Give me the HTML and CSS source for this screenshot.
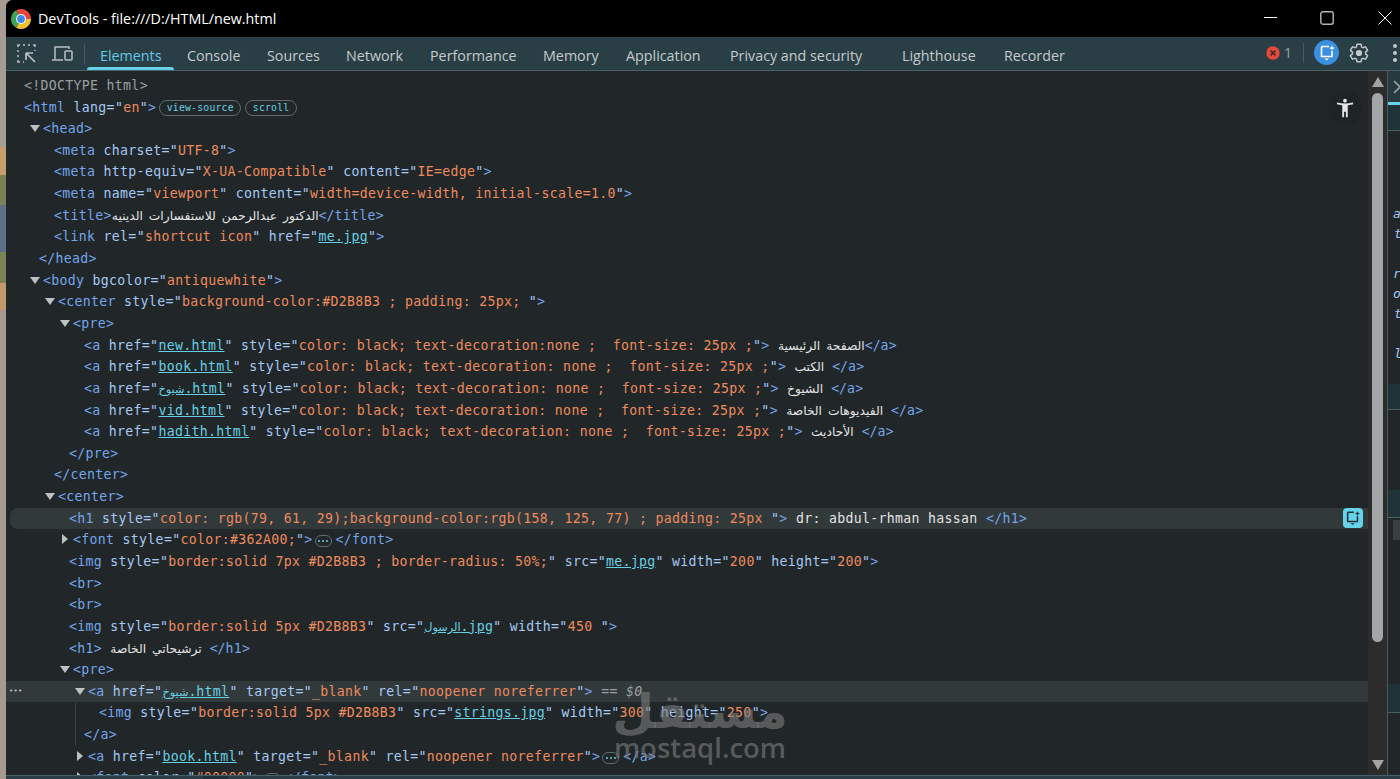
FILE: index.html
```html
<!DOCTYPE html>
<html lang="en">
<head>
    <meta charset="UTF-8">
    <title>DevTools - file:///D:/HTML/new.html</title>
    <link rel="stylesheet" href="styles.css">
</head>
<body>
<div class="screen">
    <div class="wall">
        <div class="w1"></div>
        <div class="w2"></div>
        <div class="w3"></div>
        <div class="w4"></div>
        <div class="w3b"></div>
        <div class="w2b"></div>
        <div class="w5"></div>
    </div>
    <div class="window">
        <div class="titlebar">
            <svg class="chrome" width="20" height="20" viewBox="0 0 20 20">
                <path d="M10 10L5 1.34A10 10 0 0 1 20 10Z" fill="#e5453a"/>
                <path d="M10 10L20 10A10 10 0 0 1 5 18.66Z" fill="#f5c02e"/>
                <path d="M10 10L5 18.66A10 10 0 0 1 5 1.34Z" fill="#3aa757"/>
                <circle cx="10" cy="10" r="5" fill="#fff"/>
                <circle cx="10" cy="10" r="3.9" fill="#3f86ee"/>
            </svg>
            <span class="wintitle">DevTools - file:///D:/HTML/new.html</span>
            <div class="winbtns">
                <svg class="winbtn" width="56" height="14" viewBox="0 0 56 14"><path d="M0 6.5H13" stroke="#fff" stroke-width="1"/></svg>
                <svg class="winbtn" width="58" height="14" viewBox="0 0 58 14"><rect x="0.8" y="0.8" width="12.4" height="12.4" rx="2" fill="none" stroke="#b5b5b5" stroke-width="1.4"/></svg>
                <svg class="winbtn" width="22" height="14" viewBox="0 0 22 14"><path d="M0.5 0.5L13.5 13.5M13.5 0.5L0.5 13.5" stroke="#fff" stroke-width="1"/></svg>
            </div>
        </div>

        <div class="toolbar">
            <svg class="tool-inspect" width="20" height="20" viewBox="0 0 20 20" fill="none" stroke="#b9c0c2" stroke-width="1.5">
                <path d="M1 3V1H3M6 1H8M11 1H13M16 1H18V3M18 6V7M1 6V8M1 11V13M1 16V18H3M6 18H7" />
                <path d="M9 9H16M9 9V16M9 9L18 18" stroke-width="1.7"/>
            </svg>
            <svg class="tool-device" width="21" height="18" viewBox="0 0 21 18" fill="none" stroke="#b9c0c2" stroke-width="1.5">
                <path d="M3 14V2H17V4M0 15H11"/>
                <rect x="13" y="6" width="7" height="9" rx="1"/>
            </svg>
            <div class="tooldiv"></div>
            <div class="tabs">
                <span class="tab active tab-elements">Elements</span>
                <span class="tab tab-console">Console</span>
                <span class="tab tab-sources">Sources</span>
                <span class="tab tab-network">Network</span>
                <span class="tab tab-perf">Performance</span>
                <span class="tab tab-memory">Memory</span>
                <span class="tab tab-app">Application</span>
                <span class="tab tab-privacy">Privacy and security</span>
                <span class="tab tab-light">Lighthouse</span>
                <span class="tab">Recorder</span>
            </div>
            <div class="toolright">
                <svg width="14" height="14" viewBox="0 0 14 14">
                    <circle cx="7" cy="7" r="6.7" fill="#e8483c"/>
                    <path d="M4.6 4.6L9.4 9.4M9.4 4.6L4.6 9.4" stroke="#3a2a2a" stroke-width="1.5"/>
                </svg>
                <span class="errcount">1</span>
                <div class="tooldiv right-div"></div>
                <div class="aibtn">
                    <svg width="18" height="18" viewBox="0 0 18 18" fill="none">
                        <path d="M3.5 2.5H11M14 7V12.5H3.5V2.5" stroke="#fff" stroke-width="1.6"/>
                        <path d="M6.5 14.5H11L8.7 16.5Z" fill="#fff"/>
                        <path d="M14 1L14.8 3.2L17 4L14.8 4.8L14 7L13.2 4.8L11 4L13.2 3.2Z" fill="#fff"/>
                    </svg>
                </div>
                <svg class="gear" width="22" height="22" viewBox="0 0 24 24">
                    <path d="M19.14 12.94c.04-.3.06-.61.06-.94 0-.32-.02-.64-.07-.94l2.03-1.58c.18-.14.23-.41.12-.61l-1.92-3.32c-.12-.22-.37-.29-.59-.22l-2.39.96c-.5-.38-1.03-.7-1.62-.94l-.36-2.54c-.04-.24-.24-.41-.48-.41h-3.84c-.24 0-.43.17-.47.41l-.36 2.54c-.59.24-1.13.57-1.62.94l-2.39-.96c-.22-.08-.47 0-.59.22L2.74 8.87c-.12.21-.08.47.12.61l2.03 1.58c-.05.3-.09.63-.09.94s.02.64.07.94l-2.03 1.58c-.18.14-.23.41-.12.61l1.92 3.32c.12.22.37.29.59.22l2.39-.96c.5.38 1.03.7 1.62.94l.36 2.54c.05.24.24.41.48.41h3.84c.24 0 .44-.17.47-.41l.36-2.54c.59-.24 1.13-.56 1.62-.94l2.39.96c.22.08.47 0 .59-.22l1.92-3.32c.12-.22.07-.47-.12-.61l-2.01-1.58z" fill="none" stroke="#c3c9cb" stroke-width="1.6"/>
                    <circle cx="12" cy="12" r="3.4" fill="#c3c9cb"/>
                </svg>
                <div class="dots"><i></i><i></i><i></i></div>
            </div>
        </div>

        <div class="panes">
            <div class="tree">
                <div class="row i1 grey">&lt;!DOCTYPE html&gt;</div>
                <div class="row i1"><span class="t">&lt;html</span> <span class="n">lang=</span><span class="q">"</span><span class="v">en</span><span class="q">"</span><span class="t">&gt;</span><span class="pill first">view-source</span><span class="pill">scroll</span></div>
                <div class="row i2"><span class="arr"></span><span class="t">&lt;head&gt;</span></div>
                <div class="row i3"><span class="t">&lt;meta</span> <span class="n">charset=</span><span class="q">"</span><span class="v">UTF-8</span><span class="q">"</span><span class="t">&gt;</span></div>
                <div class="row i3"><span class="t">&lt;meta</span> <span class="n">http-equiv=</span><span class="q">"</span><span class="v">X-UA-Compatible</span><span class="q">"</span> <span class="n">content=</span><span class="q">"</span><span class="v">IE=edge</span><span class="q">"</span><span class="t">&gt;</span></div>
                <div class="row i3"><span class="t">&lt;meta</span> <span class="n">name=</span><span class="q">"</span><span class="v">viewport</span><span class="q">"</span> <span class="n">content=</span><span class="q">"</span><span class="v">width=device-width, initial-scale=1.0</span><span class="q">"</span><span class="t">&gt;</span></div>
                <div class="row i3"><span class="t">&lt;title&gt;</span><span class="ar">الدكتور عبدالرحمن للاستفسارات الدينيه</span><span class="t">&lt;/title&gt;</span></div>
                <div class="row i3"><span class="t">&lt;link</span> <span class="n">rel=</span><span class="q">"</span><span class="v">shortcut icon</span><span class="q">"</span> <span class="n">href=</span><span class="q">"</span><span class="u">me.jpg</span><span class="q">"</span><span class="t">&gt;</span></div>
                <div class="row i2"><span class="t">&lt;/head&gt;</span></div>
                <div class="row i2"><span class="arr"></span><span class="t">&lt;body</span> <span class="n">bgcolor=</span><span class="q">"</span><span class="v">antiquewhite</span><span class="q">"</span><span class="t">&gt;</span></div>
                <div class="row i3"><span class="arr"></span><span class="t">&lt;center</span> <span class="n">style=</span><span class="q">"</span><span class="v">background-color:#D2B8B3 ; padding: 25px; </span><span class="q">"</span><span class="t">&gt;</span></div>
                <div class="row i4"><span class="arr"></span><span class="t">&lt;pre&gt;</span></div>
                <div class="row i5"><span class="t">&lt;a</span> <span class="n">href=</span><span class="q">"</span><span class="u">new.html</span><span class="q">"</span> <span class="n">style=</span><span class="q">"</span><span class="v">color: black; text-decoration:none ;  font-size: 25px ;</span><span class="q">"</span><span class="t">&gt;</span> <span class="ar">الصفحة الرئيسية</span><span class="t">&lt;/a&gt;</span></div>
                <div class="row i5"><span class="t">&lt;a</span> <span class="n">href=</span><span class="q">"</span><span class="u">book.html</span><span class="q">"</span> <span class="n">style=</span><span class="q">"</span><span class="v">color: black; text-decoration: none ;  font-size: 25px ;</span><span class="q">"</span><span class="t">&gt;</span> <span class="ar">الكتب</span> <span class="t">&lt;/a&gt;</span></div>
                <div class="row i5"><span class="t">&lt;a</span> <span class="n">href=</span><span class="q">"</span><span class="u"><span class="ar">شيوخ</span>.html</span><span class="q">"</span> <span class="n">style=</span><span class="q">"</span><span class="v">color: black; text-decoration: none ;  font-size: 25px ;</span><span class="q">"</span><span class="t">&gt;</span> <span class="ar">الشيوخ</span> <span class="t">&lt;/a&gt;</span></div>
                <div class="row i5"><span class="t">&lt;a</span> <span class="n">href=</span><span class="q">"</span><span class="u">vid.html</span><span class="q">"</span> <span class="n">style=</span><span class="q">"</span><span class="v">color: black; text-decoration: none ;  font-size: 25px ;</span><span class="q">"</span><span class="t">&gt;</span> <span class="ar">الفيديوهات الخاصة</span> <span class="t">&lt;/a&gt;</span></div>
                <div class="row i5"><span class="t">&lt;a</span> <span class="n">href=</span><span class="q">"</span><span class="u">hadith.html</span><span class="q">"</span> <span class="n">style=</span><span class="q">"</span><span class="v">color: black; text-decoration: none ;  font-size: 25px ;</span><span class="q">"</span><span class="t">&gt;</span> <span class="ar">الأحاديث</span> <span class="t">&lt;/a&gt;</span></div>
                <div class="row i4"><span class="t">&lt;/pre&gt;</span></div>
                <div class="row i3"><span class="t">&lt;/center&gt;</span></div>
                <div class="row i3"><span class="arr"></span><span class="t">&lt;center&gt;</span></div>
                <div class="row i4 focus"><span class="t">&lt;h1</span> <span class="n">style=</span><span class="q">"</span><span class="v">color: rgb(79, 61, 29);background-color:rgb(158, 125, 77) ; padding: 25px </span><span class="q">"</span><span class="t">&gt;</span> <span class="txt">dr: abdul-rhman hassan </span><span class="t">&lt;/h1&gt;</span>
                    <div class="floatai">
                        <svg width="16" height="18" viewBox="0 0 18 18" fill="none">
                            <path d="M3 2.5H10M14 7V13H3V2.5" stroke="#1d3238" stroke-width="1.7"/>
                            <path d="M6 15H11L8.5 17Z" fill="#1d3238"/>
                            <path d="M14 1L14.8 3.2L17 4L14.8 4.8L14 7L13.2 4.8L11 4L13.2 3.2Z" fill="#1d3238"/>
                        </svg>
                    </div>
                </div>
                <div class="row i4"><span class="arr shut"></span><span class="t">&lt;font</span> <span class="n">style=</span><span class="q">"</span><span class="v">color:#362A00;</span><span class="q">"</span><span class="t">&gt;</span><span class="more"><i></i><i></i><i></i></span><span class="t">&lt;/font&gt;</span></div>
                <div class="row i4"><span class="t">&lt;img</span> <span class="n">style=</span><span class="q">"</span><span class="v">border:solid 7px #D2B8B3 ; border-radius: 50%;</span><span class="q">"</span> <span class="n">src=</span><span class="q">"</span><span class="u">me.jpg</span><span class="q">"</span> <span class="n">width=</span><span class="q">"</span><span class="v">200</span><span class="q">"</span> <span class="n">height=</span><span class="q">"</span><span class="v">200</span><span class="q">"</span><span class="t">&gt;</span></div>
                <div class="row i4"><span class="t">&lt;br&gt;</span></div>
                <div class="row i4"><span class="t">&lt;br&gt;</span></div>
                <div class="row i4"><span class="t">&lt;img</span> <span class="n">style=</span><span class="q">"</span><span class="v">border:solid 5px #D2B8B3</span><span class="q">"</span> <span class="n">src=</span><span class="q">"</span><span class="u"><span class="ar">الرسول</span>.jpg</span><span class="q">"</span> <span class="n">width=</span><span class="q">"</span><span class="v">450 </span><span class="q">"</span><span class="t">&gt;</span></div>
                <div class="row i4"><span class="t">&lt;h1&gt;</span> <span class="ar">ترشيحاتي الخاصة</span> <span class="t">&lt;/h1&gt;</span></div>
                <div class="row i4"><span class="arr"></span><span class="t">&lt;pre&gt;</span></div>
                <div class="nest">
                    <div class="row i5 hovered"><span class="gutter">•••</span><span class="arr"></span><span class="t">&lt;a</span> <span class="n">href=</span><span class="q">"</span><span class="u"><span class="ar">شيوخ</span>.html</span><span class="q">"</span> <span class="n">target=</span><span class="q">"</span><span class="v">_blank</span><span class="q">"</span> <span class="n">rel=</span><span class="q">"</span><span class="v">noopener noreferrer</span><span class="q">"</span><span class="t">&gt;</span> <span class="grey">== <em>$0</em></span></div>
                    <div class="row i6"><span class="t">&lt;img</span> <span class="n">style=</span><span class="q">"</span><span class="v">border:solid 5px #D2B8B3</span><span class="q">"</span> <span class="n">src=</span><span class="q">"</span><span class="u">strings.jpg</span><span class="q">"</span> <span class="n">width=</span><span class="q">"</span><span class="v">300</span><span class="q">"</span> <span class="n">height=</span><span class="q">"</span><span class="v">250</span><span class="q">"</span><span class="t">&gt;</span></div>
                    <div class="row i5"><span class="t">&lt;/a&gt;</span></div>
                </div>
                <div class="row i5"><span class="arr shut"></span><span class="t">&lt;a</span> <span class="n">href=</span><span class="q">"</span><span class="u">book.html</span><span class="q">"</span> <span class="n">target=</span><span class="q">"</span><span class="v">_blank</span><span class="q">"</span> <span class="n">rel=</span><span class="q">"</span><span class="v">noopener noreferrer</span><span class="q">"</span><span class="t">&gt;</span><span class="more"><i></i><i></i><i></i></span><span class="t">&lt;/a&gt;</span></div>
                <div class="row i5"><span class="arr shut"></span><span class="t">&lt;font</span> <span class="n">color=</span><span class="q">"</span><span class="v">#00000</span><span class="q">"</span><span class="t">&gt;</span><span class="more"><i></i><i></i><i></i></span><span class="t">&lt;/font&gt;</span></div>

                <div class="a11y">
                    <svg width="22" height="22" viewBox="0 0 24 24"><path fill="#e6e6e6" d="M20.5 6c-2.61.7-5.67 1-8.5 1s-5.89-.3-8.5-1L3 8c1.86.5 4 .83 6 1v13h2v-6h2v6h2V9c2-.17 4.14-.5 6-1l-.5-2zM12 6c1.1 0 2-.9 2-2s-.9-2-2-2-2 .9-2 2 .9 2 2 2z"/></svg>
                </div>
            </div>

            <div class="scrollbar">
                <div class="sb-up"></div>
                <div class="sb-thumb"></div>
                <div class="sb-down"></div>
            </div>

            <div class="side">
                <div class="side-head"><svg width="8" height="14" viewBox="0 0 8 14" fill="none"><path d="M1 1L7 7L1 13" stroke="#9aa3a5" stroke-width="1.6"/></svg></div>
                <div class="side-tab"></div>
                <div class="side-lines">
                    <div>a</div>
                    <div class="ind">t</div>
                    <div>&nbsp;</div>
                    <div>r</div>
                    <div>o</div>
                    <div class="ind">t</div>
                    <div>&nbsp;</div>
                    <div class="ind">l</div>
                </div>
                <div class="side-sec s1"></div>
                <div class="side-gap g1"></div>
                <div class="side-sec s2"></div>
                <div class="side-gap g2"><div class="side-box"></div></div>
                <div class="side-sec s3"></div>
            </div>

            <div class="mark">
                <div class="mark-ar">مستقل</div>
                <div class="mark-en">mostaql.com</div>
            </div>
        </div>
        <div class="crumbs"><span class="crumb"></span></div>
    </div>
</div>
</body>
</html>
```

FILE: styles.css
```css
* {
    box-sizing: border-box;
}
html, body {
    margin: 0;
    padding: 0;
    height: 100%;
    overflow: hidden;
}
.screen {
    display: flex;
    width: 1400px;
    height: 779px;
    background: #a59a8f;
    overflow: hidden;
}

/* desktop wallpaper seen left of the window */
.wall {
    width: 6px;
    flex: none;
    display: flex;
    flex-direction: column;
}
.w1 { height: 147px; background: #a69c93; }
.w2 { height: 28px; background: #c79c6c; }
.w3 { height: 30px; background: #7b8056; }
.w4 { height: 47px; background: #5d6f87; }
.w3b { height: 31px; background: #7d8158; }
.w2b { height: 27px; background: #c4986a; }
.w5 { flex: 1; background: #a69a8d; }

.window {
    flex: 1;
    min-width: 0;
    display: flex;
    flex-direction: column;
    background: #212729;
    border-top-left-radius: 7px;
    overflow: hidden;
}

/* title bar */
.titlebar {
    height: 37px;
    flex: none;
    background: #000;
    display: flex;
    align-items: center;
    padding-left: 5px;
    color: #fff;
    font-family: "Open Sans", sans-serif;
    font-size: 14.3px;
}
.chrome {
    margin-right: 7px;
}
.wintitle {
    flex: 1;
}
.winbtns {
    display: flex;
    align-items: center;
    margin-top: -1px;
}
.winbtn {
    display: block;
}

/* tab toolbar */
.toolbar {
    height: 34px;
    flex: none;
    background: #2a3f45;
    border-bottom: 1px solid #456066;
    display: flex;
    align-items: center;
    position: relative;
}
.tool-inspect {
    margin-left: 11px;
}
.tool-device {
    margin-left: 15px;
}
.tooldiv {
    width: 1px;
    height: 20px;
    background: #465b60;
    margin-left: 11px;
}
.tabs {
    display: flex;
    height: 33px;
    margin-left: 2px;
}
.tab {
    display: flex;
    align-items: center;
    padding: 4px 0 0 13px;
    color: #c5cacc;
    font-family: "Open Sans", sans-serif;
    font-size: 14.3px;
    white-space: nowrap;
    position: relative;
}
.tab.active {
    color: #63c8e6;
}
.tab.active::after {
    content: "";
    position: absolute;
    left: 0;
    right: 0;
    bottom: 0;
    height: 3px;
    background: #67d3ea;
    border-radius: 3px 3px 0 0;
}
.tab-elements { width: 87px; }
.tab-console { width: 80px; }
.tab-sources { width: 79px; }
.tab-network { width: 84px; }
.tab-perf { width: 113px; }
.tab-memory { width: 83px; }
.tab-app { width: 104px; }
.tab-privacy { width: 172px; }
.tab-light { width: 102px; }

.toolright {
    margin-left: auto;
    margin-top: -2px;
    display: flex;
    align-items: center;
    padding-right: 3px;
}
.errcount {
    color: #9ba3a6;
    font-family: "Open Sans", sans-serif;
    font-size: 14px;
    margin-left: 4px;
}
.right-div {
    margin-left: 11px;
}
.aibtn {
    width: 25px;
    height: 25px;
    border-radius: 50%;
    background: #3b8fe0;
    display: flex;
    align-items: center;
    justify-content: center;
    margin-left: 10px;
}
.gear {
    margin-left: 9px;
}
.dots {
    display: flex;
    flex-direction: column;
    gap: 3px;
    margin-left: 23px;
}
.dots i {
    display: block;
    width: 4px;
    height: 4px;
    border-radius: 50%;
    background: #c3c9cb;
}

/* elements tree */
.panes {
    flex: 1;
    min-height: 0;
    display: flex;
    position: relative;
}
.tree {
    flex: 1;
    min-width: 0;
    padding-top: 3.9px;
    overflow: hidden;
    position: relative;
    background: #212729;
    font-family: "DejaVu Sans Mono", monospace;
    font-size: 13.2px;
    letter-spacing: 0.32px;
}
.row {
    height: 21.65px;
    line-height: 21.65px;
    white-space: pre;
    position: relative;
    color: #e3e3e3;
}
.i1 { padding-left: 18px; }
.i2 { padding-left: 33px; }
.i3 { padding-left: 48px; }
.i4 { padding-left: 63px; }
.i5 { padding-left: 78px; }
.i6 { padding-left: 93px; }

.row.focus {
    margin-left: 4px;
    padding-left: 59px;
    background: #32393b;
    border-radius: 8px 0 0 8px;
}
.hovered {
    background: #32393b;
}
.gutter {
    position: absolute;
    left: 3px;
    top: 0;
    color: #c8cccd;
    font-size: 7px;
}
.nest {
    position: relative;
}
.nest::before {
    content: "";
    position: absolute;
    left: 69px;
    top: 22px;
    bottom: 1px;
    width: 1px;
    background: #3a4245;
}

.t { color: #74a5eb; }
.n { color: #a6c8f4; }
.q { color: #a6c8f4; }
.v { color: #ee8a5c; }
.u { color: #67cfe3; text-decoration: underline; }
.txt { color: #e3e3e3; }
.grey { color: #9a9fa1; }
.grey em { font-style: italic; }
.ar {
    font-family: "DejaVu Sans", sans-serif;
    font-size: 12.3px;
    letter-spacing: 0;
    word-spacing: 2px;
    color: #e3e3e3;
}
.u .ar {
    font-size: 11.3px;
    color: #67cfe3;
}

.arr {
    display: inline-block;
    width: 0;
    height: 0;
    border-left: 5px solid transparent;
    border-right: 5px solid transparent;
    border-top: 7px solid #bcc1c3;
    margin-left: -9px;
    margin-right: 3px;
    vertical-align: 1px;
}
.arr.shut {
    border-top: 5px solid transparent;
    border-bottom: 5px solid transparent;
    border-left: 6px solid #bcc1c3;
    border-right: 0;
    margin-left: -7px;
    margin-right: 5px;
    vertical-align: 0;
}

.pill {
    display: inline-block;
    height: 16px;
    line-height: 14px;
    padding: 0 6.5px;
    margin-left: 4px;
    border: 1px solid #5d6b6f;
    border-radius: 8px;
    color: #67cfe3;
    font-size: 9.8px;
    letter-spacing: 0.2px;
    vertical-align: 1px;
}
.pill.first {
    margin-left: 3px;
}
.more {
    display: inline-flex;
    align-items: center;
    justify-content: center;
    gap: 2px;
    width: 17px;
    height: 12px;
    margin: 0 4px 0 2px;
    border: 1px solid #5d6b6f;
    border-radius: 6px;
    vertical-align: 2px;
}
.more i {
    display: block;
    width: 2px;
    height: 2px;
    background: #67cfe3;
    border-radius: 50%;
}

.floatai {
    position: absolute;
    right: 5px;
    top: 0;
    width: 20px;
    height: 20px;
    background: #67d3ea;
    border-radius: 4px;
    display: flex;
    align-items: center;
    justify-content: center;
}
.a11y {
    position: absolute;
    left: 1322px;
    top: 20px;
    width: 34px;
    height: 34px;
    border-radius: 50%;
    background: #1e2325;
    display: flex;
    align-items: center;
    justify-content: center;
}

/* scrollbar */
.scrollbar {
    width: 19px;
    flex: none;
    background: #2c2c2c;
    display: flex;
    flex-direction: column;
    align-items: center;
    padding-top: 6px;
}
.sb-up {
    width: 0;
    height: 0;
    border-left: 6.5px solid transparent;
    border-right: 6.5px solid transparent;
    border-bottom: 10px solid #a3a3a3;
}
.sb-thumb {
    width: 11px;
    height: 549px;
    margin-top: 6px;
    margin-right: 1px;
    background: #a3a6a6;
    border-radius: 6px;
}
.sb-down {
    width: 0;
    height: 0;
    margin-top: auto;
    margin-bottom: 5px;
    border-left: 6.5px solid transparent;
    border-right: 6.5px solid transparent;
    border-top: 10px solid #a3a3a3;
}

/* styles pane, almost all cut off */
.side {
    width: 13px;
    flex: none;
    border-left: 1px solid #4a5a5e;
    background: #212729;
    display: flex;
    flex-direction: column;
    overflow: hidden;
}
.side-head {
    height: 31px;
    flex: none;
    background: #263a40;
    padding: 9px 0 0 5px;
}
.side-tab {
    height: 29px;
    flex: none;
    background: #1f3338;
    border-top: 3px solid #67d3ea;
    border-bottom: 1px solid #4a5f64;
}
.side-lines {
    height: 253px;
    flex: none;
    padding: 73px 0 0 5px;
    font-family: "DejaVu Sans Mono", monospace;
    font-size: 13px;
    font-style: italic;
    line-height: 20px;
    color: #a6c8f4;
}
.side-lines .ind {
    padding-left: 1px;
}
.side-sec {
    flex: none;
    background: #1f3338;
    border-bottom: 1px solid #4a5f64;
}
.s1 { height: 26px; }
.s2 { height: 28px; }
.s3 { height: 29px; }
.g1 { height: 80px; flex: none; }
.g2 { height: 166px; flex: none; padding: 2px 0 0 5px; }
.side-box {
    height: 20px;
    background: #3a4042;
}

/* bottom breadcrumb, only a sliver is visible */
.crumbs {
    height: 4px;
    flex: none;
    background: #2a3f45;
    border-top: 1px solid #456066;
    padding-left: 197px;
}
.crumb {
    display: block;
    width: 25px;
    height: 3px;
    background: #1d3238;
}

/* site watermark over the screenshot */
.mark {
    position: absolute;
    left: 606px;
    top: 612px;
    width: 176px;
    text-align: center;
    color: rgba(125, 125, 125, 0.62);
    pointer-events: none;
}
.mark-ar {
    font-family: "DejaVu Sans", sans-serif;
    font-weight: bold;
    font-size: 48px;
    line-height: 56px;
}
.mark-en {
    font-family: "Open Sans", sans-serif;
    font-weight: 600;
    font-size: 27.5px;
    line-height: 30px;
    margin-top: -6px;
}
```
